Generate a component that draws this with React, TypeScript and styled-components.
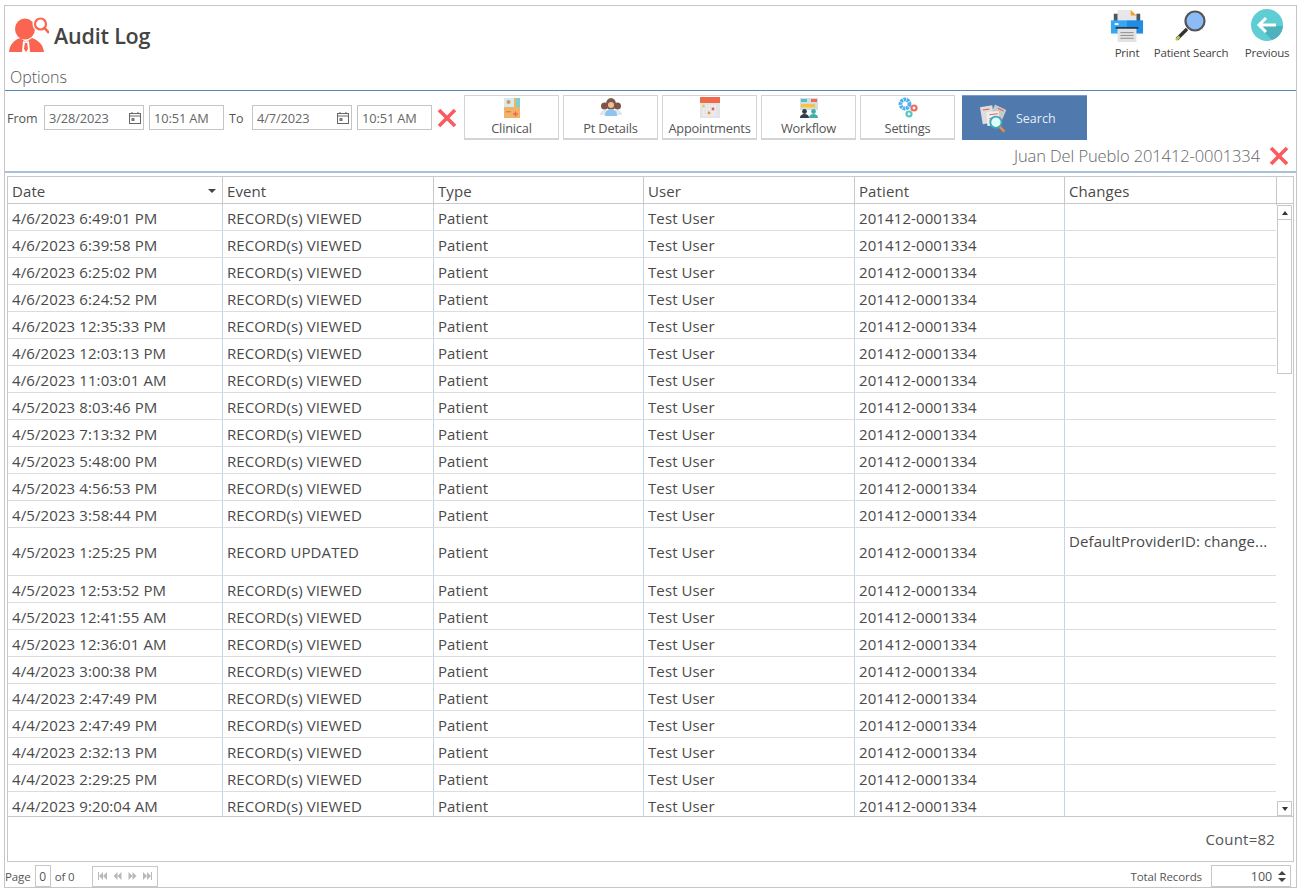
import React from "react";
import styled, { createGlobalStyle } from "styled-components";

const Global = createGlobalStyle`
  html, body { margin: 0; padding: 0; background: #fff; }
  body { font-family: "Open Sans", "Noto Sans", sans-serif; color: #444; }
  * { box-sizing: border-box; }
`;

const Page = styled.div`
  width: 1302px;
  height: 892px;
  padding: 5px 5px 4px 4px;
  background: #fff;
`;
const Frame = styled.div`
  width: 1293px;
  height: 883px;
  border: 1px solid #c6c6c6;
  display: flex;
  flex-direction: column;
`;
const Header = styled.header`
  height: 85px;
  border-bottom: 1px solid #5b87ba;
  display: flex;
  justify-content: space-between;
  flex: none;
`;
const TitleBlock = styled.div`
  display: flex;
  flex-direction: column;
  padding: 9px 0 0 4px;
`;
const TitleRow = styled.div`
  display: flex;
  align-items: center;
  gap: 5px;
  height: 40px;
`;
const Title = styled.h1`
  margin: 0;
  font-size: 21.5px;
  font-weight: 600;
  color: #444;
  letter-spacing: -0.2px;
`;
const Options = styled.div`
  font-size: 16px;
  font-weight: 300;
  color: #555;
  margin: 11px 0 0 1px;
  line-height: 22px;
`;
const TopActions = styled.div`
  display: flex;
  padding-top: 3px;
`;
const TopAction = styled.button<{ $w: number }>`
  width: ${(p) => p.$w}px;
  border: 0;
  background: none;
  padding: 0;
  height: 54px;
  display: flex;
  flex-direction: column;
  align-items: center;
  font: 400 11.5px "Open Sans", sans-serif;
  letter-spacing: -0.2px;
  color: #444;
  gap: 2px;
  line-height: 15px;
  white-space: nowrap;
`;
const TopIcon = styled.span`
  height: 34px;
  display: flex;
  align-items: flex-start;
  justify-content: center;
`;
const Toolbar = styled.div`
  height: 82px;
  border-bottom: 2px solid #a9c0dc;
  flex: none;
  display: flex;
  flex-direction: column;
`;
const FilterRow = styled.div`
  display: flex;
  align-items: center;
  height: 49px;
  padding: 4px 0 0 2px;
  flex: none;
`;
const Lbl = styled.span<{ $ml?: number; $w: number }>`
  font-size: 12.5px;
  color: #555;
  width: ${(p) => p.$w}px;
  margin-left: ${(p) => p.$ml ?? 0}px;
  padding-top: 1px;
  flex: none;
`;
const Field = styled.div<{ $w: number; $ml?: number }>`
  width: ${(p) => p.$w}px;
  margin-left: ${(p) => p.$ml ?? 0}px;
  height: 25px;
  border: 1px solid #c4c4c4;
  display: flex;
  align-items: center;
  justify-content: space-between;
  padding: 0 1px 0 4px;
  font-size: 12.8px;
  letter-spacing: -0.1px;
  color: #666;
  flex: none;
`;
const ClearSlot = styled.span`
  margin: 0 7px 0 5px;
  display: flex;
  flex: none;
`;
const NavButton = styled.button<{ $ml?: number }>`
  width: 95px;
  height: 45px;
  margin-left: ${(p) => p.$ml ?? 4}px;
  border: 1px solid #d4d4d4;
  border-bottom-width: 2px;
  background: #fff;
  padding: 1px 0 0;
  display: flex;
  flex-direction: column;
  align-items: center;
  font: 400 12.8px "Open Sans", sans-serif;
  letter-spacing: -0.2px;
  color: #555;
  flex: none;
  line-height: 16px;
`;
const NavIcon = styled.span`
  height: 23px;
  display: flex;
  align-items: flex-start;
  justify-content: center;
  flex: none;
`;
const SearchBtn = styled.button`
  width: 125px;
  height: 45px;
  margin-left: 7px;
  background: #5079ae;
  border: 0;
  border-top: 1px solid #7d9cc4;
  color: #e8eef6;
  display: flex;
  align-items: center;
  padding: 0 0 0 17px;
  gap: 5px;
  font: 400 12.5px "Open Sans", sans-serif;
  flex: none;
`;
const PatientRow = styled.div`
  display: flex;
  justify-content: flex-end;
  align-items: center;
  gap: 9px;
  padding-right: 7px;
  flex: 1;
  font-size: 16.5px;
  font-weight: 300;
  color: #666;
  letter-spacing: -0.1px;
`;
const Grid = styled.div`
  margin: 3px 0 0 2px;
  width: 1287px;
  height: 686px;
  border: 1px solid #c8c8c8;
  display: flex;
  flex-direction: column;
  flex: none;
`;
const HeadRow = styled.div`
  display: grid;
  grid-template-columns: 215px 211px 210px 211px 210px 212px 1fr;
  height: 27px;
  border-bottom: 1px solid #c8c8c8;
  flex: none;
`;
const HeadCell = styled.div`
  position: relative;
  border-right: 1px solid #c8c8c8;
  padding: 1px 4px 0;
  font-size: 15px;
  letter-spacing: 0.1px;
  line-height: 27px;
  color: #4a4a4a;
`;
const SortCaret = styled.span`
  position: absolute;
  right: 6px;
  top: 12px;
  border-left: 4px solid transparent;
  border-right: 4px solid transparent;
  border-top: 4px solid #444;
`;
const Body = styled.div`
  display: flex;
  height: 612px;
  overflow: hidden;
  flex: none;
`;
const Rows = styled.div`
  width: 1268px;
  flex: none;
`;
const Row = styled.div<{ $tall?: boolean }>`
  display: grid;
  grid-template-columns: 215px 211px 210px 211px 210px 1fr;
  height: ${(p) => (p.$tall ? 48 : 27)}px;
  border-bottom: 1px solid #dcdcdc;
  ${(p) => (p.$tall ? "& > div:not(:last-child) { padding-top: 0; }" : "")}
`;
const Cell = styled.div<{ $top?: boolean }>`
  border-right: 1px solid #c3d5e6;
  padding: ${(p) => (p.$top ? "3px 4px 0" : "2px 4px 0")};
  display: flex;
  align-items: ${(p) => (p.$top ? "flex-start" : "center")};
  font-size: 15px;
  letter-spacing: 0.1px;
  line-height: 20px;
  color: #4a4a4a;
  white-space: nowrap;
  overflow: hidden;
  &:last-child { border-right: 0; }
`;
const Scroll = styled.div`
  width: 16px;
  margin-left: 1px;
  display: flex;
  flex-direction: column;
  padding-top: 1px;
`;
const ScrollBtn = styled.div<{ $up?: boolean }>`
  width: 15px;
  height: 15px;
  border: 1px solid #c8c8c8;
  background: #fff;
  display: flex;
  align-items: center;
  justify-content: center;
  flex: none;
  &::before {
    content: "";
    border-left: 3.5px solid transparent;
    border-right: 3.5px solid transparent;
    ${(p) => (p.$up ? "border-bottom: 4px solid #333;" : "border-top: 4px solid #333;")}
  }
`;
const Thumb = styled.div`
  width: 15px;
  height: 155px;
  margin-top: -1px;
  border: 1px solid #c8c8c8;
  flex: none;
`;
const ScrollGap = styled.div`
  flex: 1;
`;
const GridFoot = styled.div`
  flex: 1;
  border-top: 1px solid #c8c8c8;
  display: flex;
  align-items: center;
  justify-content: flex-end;
  padding: 0 18px 0 0;
  font-size: 15px;
  letter-spacing: 0.2px;
  color: #555;
`;
const Pager = styled.div`
  flex: 1;
  display: flex;
  align-items: center;
  justify-content: space-between;
  padding: 3px 5px 0 0;
`;
const PagerLeft = styled.div`
  display: flex;
  align-items: center;
  font-size: 11.5px;
  color: #555;
  letter-spacing: -0.1px;
`;
const PageBox = styled.div`
  width: 16px;
  height: 22px;
  border: 1px solid #c8c8c8;
  margin: 0 4px 0 4px;
  display: flex;
  align-items: center;
  justify-content: center;
  font-size: 12px;
`;
const PageNav = styled.div`
  width: 66px;
  height: 21px;
  margin-left: 17px;
  border: 1px solid #c8c8c8;
  display: flex;
  align-items: center;
  justify-content: space-around;
  padding: 0 2px;
`;
const PagerRight = styled.div`
  display: flex;
  align-items: center;
  font-size: 11.5px;
  color: #555;
  letter-spacing: -0.1px;
`;
const Spin = styled.div`
  width: 80px;
  height: 22px;
  margin-left: 9px;
  border: 1px solid #c8c8c8;
  display: flex;
  align-items: center;
  justify-content: flex-end;
  padding-right: 4px;
  gap: 6px;
  font-size: 12.5px;
  color: #555;
`;
const SpinArrows = styled.div`
  display: flex;
  flex-direction: column;
  gap: 3px;
  &::before, &::after {
    content: "";
    border-left: 4px solid transparent;
    border-right: 4px solid transparent;
  }
  &::before { border-bottom: 4px solid #444; }
  &::after { border-top: 4px solid #444; }
`;

const RedX = ({ s = 20 }: { s?: number }) => (
  <svg width={s} height={s} viewBox="0 0 20 20" style={{ flex: "none" }}>
    <path d="M2 2 L18 18 M18 2 L2 18" stroke="#fb5a5f" strokeWidth="3.6" />
  </svg>
);
const Cal = () => (
  <svg width="14" height="14" viewBox="0 0 14 14">
    <rect x="1.5" y="2.5" width="11" height="10" fill="none" stroke="#666" />
    <path d="M1.5 5h11" stroke="#666" />
    <path d="M4 1v2M10 1v2" stroke="#666" />
    <rect x="3.5" y="7" width="3" height="3" fill="#777" />
  </svg>
);
const AuditIcon = () => (
  <svg width="40" height="40" viewBox="0 0 40 40">
    <path d="M0 37c1-9 6-12 11-14l6 4 6-4c5 2 11 5 12 14z" fill="#fb6450" />
    <path d="M14 26l3 1 3-1 1 11h-8z" fill="#fff" />
    <path d="M15.800 28h2.400l.8 6-2 3-2-3z" fill="#fb6450" />
    <ellipse cx="16" cy="14" rx="10" ry="10.500" fill="#fb6450" />
    <circle cx="31.500" cy="9" r="8" fill="#fff" />
    <circle cx="31.500" cy="9" r="5.500" fill="#fff" stroke="#fb6450" strokeWidth="2.200" />
    <path d="M35.500 13l4.500 5" stroke="#fb6450" strokeWidth="2.600" />
  </svg>
);
const PrintIcon = () => (
  <svg width="34" height="34" viewBox="0 0 36 36">
    <path d="M8 1h14l6 6v9H8z" fill="#e7e7e7" />
    <path d="M22 1l6 6h-6z" fill="#f5a02c" />
    <rect x="4" y="5" width="4" height="8" fill="#475a68" />
    <rect x="28" y="5" width="4" height="8" fill="#475a68" />
    <rect x="1" y="12" width="17" height="14" fill="#36a7f4" />
    <rect x="18" y="12" width="17" height="14" fill="#1f8ce8" />
    <rect x="5" y="15" width="4" height="2" fill="#fff" />
    <rect x="6" y="19" width="24" height="2" fill="#2d3b45" />
    <rect x="8" y="21" width="20" height="14" fill="#e2e2e2" />
    <path d="M11 25h14M11 28h14M11 31h14" stroke="#8b8b8b" />
  </svg>
);
const LensIcon = () => (
  <svg width="34" height="34" viewBox="0 0 34 34">
    <path d="M13 20L3 30" stroke="#333" strokeWidth="3.400" />
    <path d="M5.500 27.500L2 31" stroke="#b6c94c" strokeWidth="2.600" />
    <circle cx="21" cy="12" r="9.500" fill="#8cbcf8" stroke="#555" strokeWidth="2.200" />
  </svg>
);
const BackIcon = () => (
  <svg width="32" height="32" viewBox="0 0 32 32">
    <circle cx="16" cy="16" r="16" fill="#5fcdd4" />
    <path d="M8 17l13 14a16 16 0 0 0 11-14z" fill="#4db2bd" />
    <path d="M8 16h17M15 9l-7 7 7 7" stroke="#fff" strokeWidth="3" fill="none" />
  </svg>
);
const ClinicalIcon = () => (
  <svg width="20" height="22" viewBox="0 0 20 22">
    <rect x="2" y="1" width="16" height="20" fill="#f2b368" />
    <rect x="2" y="1" width="10" height="9" fill="#d5ecec" />
    <rect x="14" y="1" width="4" height="9" fill="#7ecfd0" />
    <circle cx="6.500" cy="5" r="2" fill="#e58c68" />
    <path d="M11 17h5M13.500 14.500v5" stroke="#ef6a50" strokeWidth="1.600" />
    <rect x="4" y="14" width="5" height="1.400" fill="#d48a3e" />
  </svg>
);
const PeopleIcon = () => (
  <svg width="22" height="20" viewBox="0 0 22 20">
    <circle cx="4.500" cy="9" r="3.500" fill="#7d5648" />
    <circle cx="17.500" cy="9" r="3.500" fill="#7d5648" />
    <path d="M0 18c0-4 3-5 5-5s5 1 5 5z M12 18c0-4 3-5 5-5s5 1 5 5z" fill="#dfe6ee" />
    <ellipse cx="11" cy="7" rx="5" ry="6" fill="#7d5648" />
    <circle cx="11" cy="8" r="3" fill="#f0bd96" />
    <path d="M5 19c0-5 3-7 6-7s6 2 6 7z" fill="#8cc6ee" />
  </svg>
);
const CalIcon = () => (
  <svg width="20" height="21" viewBox="0 0 20 21">
    <rect x="0" y="0" width="20" height="21" fill="#e4e4e8" />
    <rect x="0" y="0" width="20" height="6" fill="#ee6a4a" />
    <path d="M3 9h14M3 12h14M3 15h14M3 18h14" stroke="#fff" strokeDasharray="1.400 1.400" />
    <circle cx="3.500" cy="9" r="1.400" fill="#f7c53d" />
    <circle cx="13" cy="12" r="1.400" fill="#ee5a4a" />
    <circle cx="9" cy="16" r="1.400" fill="#f0932b" />
  </svg>
);
const FlowIcon = () => (
  <svg width="20" height="22" viewBox="0 0 20 22">
    <rect x="1" y="1" width="18" height="12" fill="#d5dde4" />
    <rect x="2" y="2" width="6" height="3" fill="#53c0c8" />
    <rect x="12" y="2" width="6" height="3" fill="#ee6a5a" />
    <rect x="2" y="7" width="14" height="3.400" fill="#f7c53d" />
    <circle cx="5.500" cy="14.500" r="2.400" fill="#2f3e48" />
    <circle cx="14.500" cy="14.500" r="2.400" fill="#3fb0a8" />
    <path d="M1 21c0-3 2-4 4.500-4S10 18 10 21z" fill="#2f3e48" />
    <path d="M10 21c0-3 2-4 4.500-4s4.500 1 4.500 4z" fill="#3fb0a8" />
  </svg>
);
const GearIcon = () => (
  <svg width="20" height="22" viewBox="0 0 20 22">
    <circle cx="7" cy="7" r="4.500" fill="#fff" stroke="#4fb0ec" strokeWidth="3.800" strokeDasharray="2.600 .6" />
    <circle cx="16" cy="11" r="2.500" fill="#fff" stroke="#ee6a5a" strokeWidth="2.200" />
    <circle cx="11" cy="17" r="2.500" fill="#fff" stroke="#4fc9c0" strokeWidth="2.200" />
  </svg>
);
const DocsIcon = () => (
  <svg width="32" height="33" viewBox="0 0 34 34">
    <path d="M1 5l13-2 3 18-13 2z" fill="#ddd" />
    <path d="M17 2l12 6-6 14-12-6z" fill="#c9c9c9" />
    <path d="M8 10l13-1 1 15-13 1z" fill="#eee" />
    <path d="M4 8l7-1M20 6l6 3M11 13l9-1M11 17l3 0" stroke="#e8655a" strokeWidth="1.200" />
    <circle cx="18" cy="21" r="6" fill="#dff" stroke="#3fa7b4" strokeWidth="2" />
    <path d="M22 26l5 5" stroke="#f08a3c" strokeWidth="2.600" />
  </svg>
);

const NavTri = ({ d }: { d: string }) => (
  <svg width="9" height="8" viewBox="0 0 9 8">
    <path d={d} fill="#b9b9b9" />
  </svg>
);

type R = [string, string?];
const rows: R[] = [
  ["4/6/2023 6:49:01 PM"], ["4/6/2023 6:39:58 PM"], ["4/6/2023 6:25:02 PM"], ["4/6/2023 6:24:52 PM"],
  ["4/6/2023 12:35:33 PM"], ["4/6/2023 12:03:13 PM"], ["4/6/2023 11:03:01 AM"], ["4/5/2023 8:03:46 PM"],
  ["4/5/2023 7:13:32 PM"], ["4/5/2023 5:48:00 PM"], ["4/5/2023 4:56:53 PM"], ["4/5/2023 3:58:44 PM"],
  ["4/5/2023 1:25:25 PM", "u"], ["4/5/2023 12:53:52 PM"], ["4/5/2023 12:41:55 AM"], ["4/5/2023 12:36:01 AM"],
  ["4/4/2023 3:00:38 PM"], ["4/4/2023 2:47:49 PM"], ["4/4/2023 2:47:49 PM"], ["4/4/2023 2:32:13 PM"],
  ["4/4/2023 2:29:25 PM"], ["4/4/2023 9:20:04 AM"],
];

export default function App() {
  return (
    <Page>
      <Global />
      <Frame>
        <Header>
          <TitleBlock>
            <TitleRow>
              <AuditIcon />
              <Title>Audit Log</Title>
            </TitleRow>
            <Options>Options</Options>
          </TitleBlock>
          <TopActions>
            <TopAction $w={34}><TopIcon><PrintIcon /></TopIcon>Print</TopAction>
            <TopAction $w={94}><TopIcon><LensIcon /></TopIcon>Patient Search</TopAction>
            <TopAction $w={58}><TopIcon><BackIcon /></TopIcon>Previous</TopAction>
          </TopActions>
        </Header>
        <Toolbar>
          <FilterRow>
            <Lbl $w={37}>From</Lbl>
            <Field $w={100}>3/28/2023<Cal /></Field>
            <Field $w={75} $ml={5}>10:51 AM</Field>
            <Lbl $w={23} $ml={5}>To</Lbl>
            <Field $w={100}>4/7/2023<Cal /></Field>
            <Field $w={75} $ml={5}>10:51 AM</Field>
            <ClearSlot><RedX /></ClearSlot>
            <NavButton $ml={0}><NavIcon><ClinicalIcon /></NavIcon>Clinical</NavButton>
            <NavButton><NavIcon><PeopleIcon /></NavIcon>Pt Details</NavButton>
            <NavButton><NavIcon><CalIcon /></NavIcon>Appointments</NavButton>
            <NavButton><NavIcon><FlowIcon /></NavIcon>Workflow</NavButton>
            <NavButton><NavIcon><GearIcon /></NavIcon>Settings</NavButton>
            <SearchBtn><DocsIcon />Search</SearchBtn>
          </FilterRow>
          <PatientRow>Juan Del Pueblo 201412-0001334<RedX /></PatientRow>
        </Toolbar>
        <Grid>
          <HeadRow>
            <HeadCell>Date<SortCaret /></HeadCell>
            <HeadCell>Event</HeadCell>
            <HeadCell>Type</HeadCell>
            <HeadCell>User</HeadCell>
            <HeadCell>Patient</HeadCell>
            <HeadCell>Changes</HeadCell>
            <div />
          </HeadRow>
          <Body>
            <Rows>
              {rows.map(([d, u], i) => (
                <Row key={i} $tall={!!u}>
                  <Cell>{d}</Cell>
                  <Cell>{u ? "RECORD UPDATED" : "RECORD(s) VIEWED"}</Cell>
                  <Cell>Patient</Cell>
                  <Cell>Test User</Cell>
                  <Cell>201412-0001334</Cell>
                  <Cell $top>{u ? "DefaultProviderID: change..." : ""}</Cell>
                </Row>
              ))}
            </Rows>
            <Scroll>
              <ScrollBtn $up />
              <Thumb />
              <ScrollGap />
              <ScrollBtn />
            </Scroll>
          </Body>
          <GridFoot>Count=82</GridFoot>
        </Grid>
        <Pager>
          <PagerLeft>
            Page<PageBox>0</PageBox>of 0
            <PageNav>
              <NavTri d="M0 0h1v8H0zM5 0v8L1 4zM9 0v8L5 4z" />
              <NavTri d="M4.500 0v8L.5 4zM8.500 0v8L4.500 4z" />
              <NavTri d="M.5 0v8l4-4zM4.500 0v8l4-4z" />
              <NavTri d="M0 0v8l4-4zM4 0v8l4-4zM8 0h1v8H8z" />
            </PageNav>
          </PagerLeft>
          <PagerRight>
            Total Records
            <Spin>100<SpinArrows /></Spin>
          </PagerRight>
        </Pager>
      </Frame>
    </Page>
  );
}
